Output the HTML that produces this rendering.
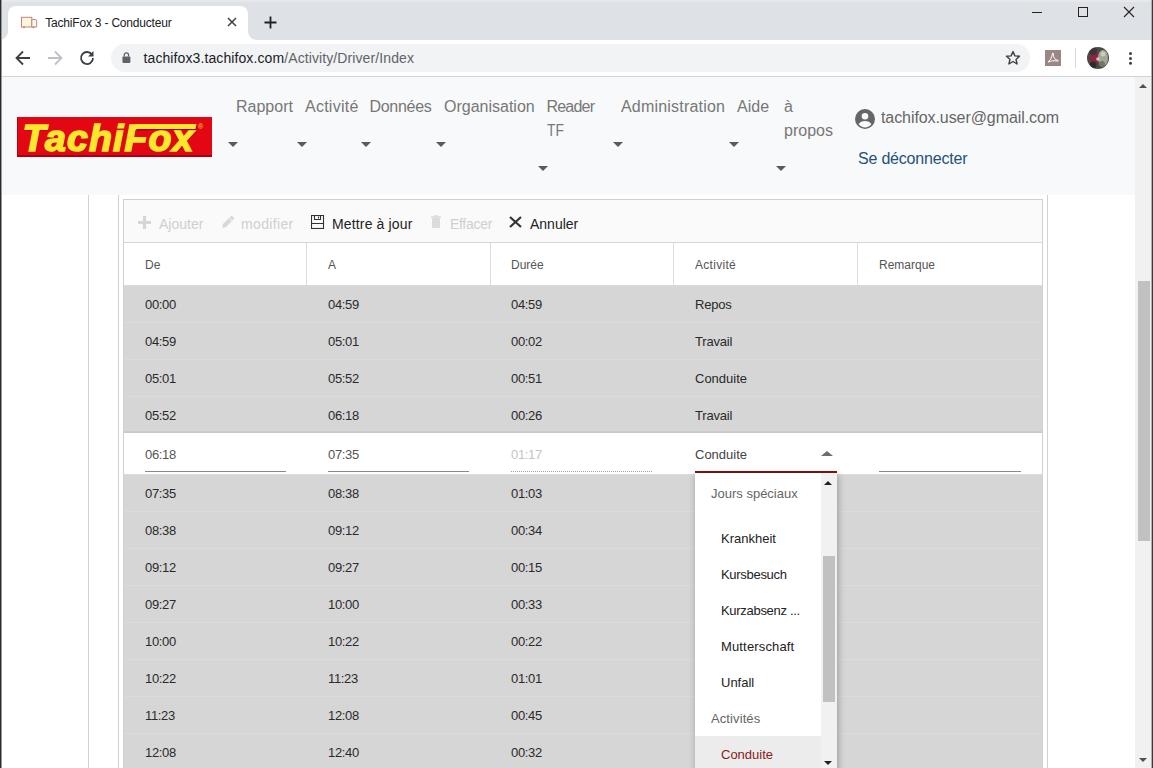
<!DOCTYPE html><html lang="fr"><head><meta charset="utf-8"><title>TachiFox 3 - Conducteur</title><style>
*{box-sizing:border-box;margin:0;padding:0}
html,body{width:1153px;height:768px;overflow:hidden;background:#fff;font-family:"Liberation Sans",sans-serif;}
.abs{position:absolute}
#root{position:relative;width:1153px;height:768px;overflow:hidden;background:#fff}
#tabstrip{left:0;top:0;width:1153px;height:40px;background:#dee1e6}
#tab{left:8px;top:6px;width:240px;height:34px;background:#fff;border-radius:8px 8px 0 0}
#tabtitle{left:45.300px;top:16px;font-size:12px;color:#202124;letter-spacing:-0.2px;white-space:nowrap}
#toolbar{left:0;top:40px;width:1153px;height:37px;background:#fff;border-bottom:1px solid #d0d2d5}
#pill{left:111px;top:44px;width:919px;height:28px;border-radius:14px;background:#f1f3f4}
#url{left:143.5px;top:50px;font-size:14px;color:#202124;white-space:nowrap;letter-spacing:0.1px}
#url span{color:#5f6368}
#nav{left:0;top:77px;width:1135px;height:118px;background:#f8f9fa}
.nv{position:absolute;font-size:16px;line-height:24px;color:#777;white-space:nowrap}
.caret{position:absolute;width:0;height:0;border-left:5px solid transparent;border-right:5px solid transparent;border-top:5px solid #5a5a5a}
#logo{left:17px;top:117px;width:195px;height:40px;background:#e30613;border-bottom:2px solid #a80010;border-left:1px solid #b80012;overflow:hidden}
#logotxt{left:4.5px;top:-1.5px;font-size:37.5px;font-weight:bold;font-style:italic;color:#fde62e;letter-spacing:1.1px;white-space:nowrap;line-height:44px;-webkit-text-stroke:1.6px #fde62e;text-shadow:1px 1px 0 #9a0010,-1px 1px 0 #b00012}
#sbar{left:1135px;top:77px;width:16px;height:691px;background:#f1f1f1}
#sthumb{left:1138px;top:281px;width:12px;height:260px;background:#c1c1c1}
.vline{position:absolute;width:1px;background:#d2d2d2}
#grid{left:123px;top:199px;width:920px;height:600px;border:1px solid #d0d0d0;background:#fff}
#gtool{left:124px;top:200px;width:918px;height:43px;background:#fafafa;border-bottom:1px solid #d6d6d6}
.tb{position:absolute;font-size:14px;white-space:nowrap;top:215.5px;line-height:16px}
.dis{color:#cfcfcf}
.en{color:#222}
#ghead{left:124px;top:243px;width:918px;height:42px;background:#fff}
.th{position:absolute;top:258px;font-size:12px;color:#555;line-height:14px;white-space:nowrap}
.row{position:absolute;left:124px;width:918px;height:37px;background:#d6d6d6;border-top:1px solid #dbdbdb}
.td{position:absolute;font-size:13px;color:#2a2a2a;line-height:15px;white-space:nowrap;letter-spacing:-0.35px}
.tx{letter-spacing:-0.2px}
.t0{letter-spacing:0}
.ul{position:absolute;height:1px;background:#8a8a8a;top:471px}
#pop{left:695px;top:473px;width:142px;height:300px;background:#fff;box-shadow:1px 2px 7px rgba(0,0,0,.3)}
.it{position:absolute;font-size:13px;line-height:15px;white-space:nowrap;color:#222;letter-spacing:-0.3px}
.gh{letter-spacing:0}
.gh{color:#666}
</style></head><body><div id="root">
<div id="tabstrip" class="abs"></div><div class="abs" style="left:0;top:0;width:1153px;height:2px;background:#e6e8ec"></div><div id="tab" class="abs"></div>
<div class="abs" style="left:0px;top:32px;width:8px;height:8px;background:radial-gradient(circle at 0 0,rgba(255,255,255,0) 7.500px,#fff 8px)"></div><div class="abs" style="left:248px;top:32px;width:8px;height:8px;background:radial-gradient(circle at 100% 0,rgba(255,255,255,0) 7.500px,#fff 8px)"></div>
<svg class="abs" style="left:20px;top:15px" width="18" height="14" viewBox="0 0 18 14"><rect x="1.500" y="2.300" width="10.300" height="9.700" fill="#fdf5dc" stroke="#c0897c" stroke-width="1"/><path d="M11.800 4.500h3.200a1.700 1.700 0 0 1 1.700 1.700v5.800h-4.900z" fill="#fdf8ea" stroke="#b88a80" stroke-width="1"/><circle cx="4" cy="12.300" r="1" fill="#c0897c"/><circle cx="13.500" cy="12.300" r="1" fill="#c0897c"/></svg>
<div id="tabtitle" class="abs">TachiFox 3 - Conducteur</div>
<svg class="abs" style="left:227px;top:17px" width="10" height="10" viewBox="0 0 10 10"><path d="M1 1L9 9M9 1L1 9" stroke="#3c4043" stroke-width="1.5" fill="none"/></svg>
<svg class="abs" style="left:264px;top:16px" width="13" height="13" viewBox="0 0 13 13"><path d="M6.5 0.5V12.5M0.5 6.5H12.5" stroke="#202124" stroke-width="1.8" fill="none"/></svg>
<svg class="abs" style="left:1030px;top:4px" width="110" height="18" viewBox="0 0 110 18"><path d="M2 8.5H12" stroke="#222" stroke-width="1"/><rect x="48.5" y="3.5" width="9" height="9" fill="none" stroke="#222" stroke-width="1"/><path d="M94 3L104 13M104 3L94 13" stroke="#222" stroke-width="1.1"/></svg>
<div id="toolbar" class="abs"></div><div id="pill" class="abs"></div>
<svg class="abs" style="left:15px;top:50px" width="16" height="16" viewBox="0 0 16 16"><path d="M15 8H2M8 1.5L1.5 8L8 14.5" stroke="#3c4043" stroke-width="1.8" fill="none"/></svg>
<svg class="abs" style="left:47px;top:50px" width="16" height="16" viewBox="0 0 16 16"><path d="M1 8H14M8 1.5L14.5 8L8 14.5" stroke="#bdc1c6" stroke-width="1.8" fill="none"/></svg>
<svg class="abs" style="left:79px;top:50px" width="16" height="16" viewBox="0 0 16 16"><path d="M13.2 5A6 6 0 1 0 14 8" stroke="#3c4043" stroke-width="1.8" fill="none"/><path d="M14.5 1v5.5H9z" fill="#3c4043"/></svg>
<svg class="abs" style="left:122.300px;top:51.800px" width="8.800" height="11.400" viewBox="0 0 10 13"><rect x="0.5" y="5" width="9" height="7.5" rx="1" fill="#5f6368"/><path d="M2.5 5V3.5a2.5 2.5 0 0 1 5 0V5" stroke="#5f6368" stroke-width="1.4" fill="none"/></svg>
<div id="url" class="abs">tachifox3.tachifox.com<span>/Activity/Driver/Index</span></div>
<svg class="abs" style="left:1005px;top:50px" width="16" height="16" viewBox="0 0 16 16"><path d="M8 1.6l1.9 4.3 4.6.4-3.5 3.1 1.1 4.6L8 11.5 3.9 14l1.1-4.6L1.5 6.3l4.6-.4z" fill="none" stroke="#3c4043" stroke-width="1.4" stroke-linejoin="round"/></svg>
<svg class="abs" style="left:1045px;top:50px" width="16" height="16" viewBox="0 0 16 16"><rect width="16" height="16" fill="#9c8684"/><path d="M3 12c2-1 4-5 4.5-8.5c.3-1.5 1.2-.5.8 1.5c-.4 2 2 5 4.700 5.500c1 .2 0 1-1.500.5c-2-.6-5-.3-8.500 1z" fill="none" stroke="#fff" stroke-width="1"/></svg>
<div class="abs" style="left:1075px;top:48px;width:1px;height:20px;background:#d5d7da"></div>
<svg class="abs" style="left:1087px;top:47px" width="22" height="22" viewBox="0 0 22 22"><defs><clipPath id="av"><circle cx="11" cy="11" r="11"/></clipPath></defs><g clip-path="url(#av)"><rect width="22" height="22" fill="#4d4946"/><ellipse cx="8" cy="11" rx="5.500" ry="6" fill="#8a2440"/><ellipse cx="16" cy="11" rx="5" ry="8" fill="#a3a596"/><circle cx="16" cy="7" r="2.500" fill="#c9cbbd"/><circle cx="15" cy="17" r="3" fill="#6d7a62"/><circle cx="6" cy="4" r="4" fill="#3a3636"/><circle cx="6" cy="18" r="3.500" fill="#2f2c2d"/><circle cx="11" cy="12" r="1.800" fill="#d8c3c0"/></g></svg>
<svg class="abs" style="left:1128px;top:49px" width="5" height="18" viewBox="0 0 5 18"><circle cx="2.500" cy="4.600" r="1.500" fill="#3c4043"/><circle cx="2.500" cy="9.400" r="1.500" fill="#3c4043"/><circle cx="2.500" cy="14.200" r="1.500" fill="#3c4043"/></svg>
<div id="nav" class="abs"></div>
<div id="logo" class="abs"><div id="logotxt" class="abs">TachiFox</div><div class="abs" style="left:118px;top:7px;width:60px;height:5px;background:#fde62e;transform:skewX(-12deg);box-shadow:1px 1px 0 #9a0010"></div><div class="abs" style="left:180px;top:6px;font-size:7px;color:#fde62e;line-height:8px">®</div></div>
<div class="nv" style="left:236px;top:95px;">Rapport</div>
<div class="nv" style="left:305px;top:95px;letter-spacing:0.25px">Activité</div>
<div class="nv" style="left:369.5px;top:95px;letter-spacing:-0.3px">Données</div>
<div class="nv" style="left:444px;top:95px;">Organisation</div>
<div class="nv" style="left:546.5px;top:95px;letter-spacing:-0.8px">Reader</div>
<div class="nv" style="left:547px;top:119px;transform:scaleX(.86);transform-origin:left">TF</div>
<div class="nv" style="left:621px;top:95px;letter-spacing:0.2px">Administration</div>
<div class="nv" style="left:737px;top:95px;">Aide</div>
<div class="nv" style="left:784px;top:95px;">à</div>
<div class="nv" style="left:784px;top:119px;">propos</div>
<div class="caret" style="left:228px;top:142px"></div>
<div class="caret" style="left:297px;top:142px"></div>
<div class="caret" style="left:361px;top:142px"></div>
<div class="caret" style="left:436px;top:142px"></div>
<div class="caret" style="left:538px;top:166px"></div>
<div class="caret" style="left:613px;top:142px"></div>
<div class="caret" style="left:729px;top:142px"></div>
<div class="caret" style="left:776px;top:166px"></div>
<svg class="abs" style="left:855px;top:109px" width="20" height="20" viewBox="0 0 20 20"><circle cx="10" cy="10" r="10" fill="#666"/><circle cx="10" cy="7.2" r="3.3" fill="#f8f9fa"/><path d="M3.6 15.200c1.300-2.300 3.800-3.200 6.400-3.200s5.100.9 6.400 3.200a8 8 0 0 1-12.800 0z" fill="#f8f9fa"/></svg>
<div class="nv" style="left:881px;top:106px;color:#666;letter-spacing:-0.08px">tachifox.user@gmail.com</div>
<div class="nv" style="left:858px;top:147px;color:#23527c;letter-spacing:-0.2px">Se déconnecter</div>
<div id="sbar" class="abs"></div><div id="sthumb" class="abs"></div>
<div class="abs" style="left:1139px;top:84px;width:0;height:0;border-left:4px solid transparent;border-right:4px solid transparent;border-bottom:4px solid #505050"></div>
<div class="abs" style="left:1139px;top:758px;width:0;height:0;border-left:4px solid transparent;border-right:4px solid transparent;border-top:4px solid #505050"></div>
<div class="abs" style="left:1151px;top:0;width:1px;height:768px;background:#b0b0b0"></div><div class="abs" style="left:1152px;top:0;width:1px;height:768px;background:#3a3a3a"></div>
<div class="abs" style="left:0;top:0;width:1px;height:768px;background:#2a2a2a"></div><div class="abs" style="left:1px;top:0;width:1px;height:768px;background:#9a9a9a"></div>
<div class="vline" style="left:88px;top:195px;height:573px"></div>
<div class="vline" style="left:118px;top:195px;height:573px"></div>
<div class="vline" style="left:1047px;top:195px;height:573px"></div>
<div id="grid" class="abs"></div><div id="gtool" class="abs"></div>
<svg class="abs" style="left:137.500px;top:215.500px" width="13" height="13" viewBox="0 0 13 13"><path d="M6.500 0V13M0 6.500H13" stroke="#d6d6d6" stroke-width="3.200"/></svg>
<div class="tb dis" style="left:159px">Ajouter</div>
<svg class="abs" style="left:221px;top:215px" width="14" height="14" viewBox="0 0 14 14"><path d="M1 13l1-4 6-6 3 3-6 6z" fill="#d8d8d8"/><path d="M9.500 1.500l3 3" stroke="#d8d8d8" stroke-width="3"/></svg>
<div class="tb dis" style="left:241px;letter-spacing:0.35px">modifier</div>
<svg class="abs" style="left:311px;top:215px" width="14" height="14" viewBox="0 0 14 14"><rect x="0.500" y="0.500" width="12" height="13" fill="none" stroke="#333" stroke-width="1.100"/><path d="M3.500 0.500v4h6v-4M0.500 8.500h12" fill="none" stroke="#333" stroke-width="1.100"/><path d="M7.500 1.500v2" stroke="#333" stroke-width="1"/></svg>
<div class="tb en" style="left:332px;letter-spacing:0.15px">Mettre à jour</div>
<svg class="abs" style="left:431px;top:215px" width="10" height="14" viewBox="0 0 10 14"><path d="M1 3h8v10H1z" fill="#dcdcdc"/><path d="M0 2h10M3.500 0.500h3" stroke="#dcdcdc" stroke-width="1.500"/></svg>
<div class="tb dis" style="left:450px;letter-spacing:-0.3px">Effacer</div>
<svg class="abs" style="left:509px;top:216px" width="13" height="12" viewBox="0 0 13 12"><path d="M1 1L12 11M12 1L1 11" stroke="#333" stroke-width="2.200"/></svg>
<div class="tb en" style="left:530px">Annuler</div>
<div id="ghead" class="abs"></div>
<div class="vline" style="left:306px;top:243px;height:42px;background:#dedede"></div>
<div class="vline" style="left:490px;top:243px;height:42px;background:#dedede"></div>
<div class="vline" style="left:673px;top:243px;height:42px;background:#dedede"></div>
<div class="vline" style="left:857px;top:243px;height:42px;background:#dedede"></div>
<div class="th" style="left:145px;">De</div>
<div class="th" style="left:328px;">A</div>
<div class="th" style="left:511px;">Durée</div>
<div class="th" style="left:695px;letter-spacing:0.3px">Activité</div>
<div class="th" style="left:879px;">Remarque</div>
<div class="row" style="top:285px"></div>
<div class="td" style="left:145px;top:297px">00:00</div>
<div class="td" style="left:328px;top:297px">04:59</div>
<div class="td" style="left:511px;top:297px">04:59</div>
<div class="td tx" style="left:695px;top:297px">Repos</div>
<div class="row" style="top:322px"></div>
<div class="td" style="left:145px;top:334px">04:59</div>
<div class="td" style="left:328px;top:334px">05:01</div>
<div class="td" style="left:511px;top:334px">00:02</div>
<div class="td tx" style="left:695px;top:334px">Travail</div>
<div class="row" style="top:359px"></div>
<div class="td" style="left:145px;top:371px">05:01</div>
<div class="td" style="left:328px;top:371px">05:52</div>
<div class="td" style="left:511px;top:371px">00:51</div>
<div class="td t0" style="left:695px;top:371px">Conduite</div>
<div class="row" style="top:396px"></div>
<div class="td" style="left:145px;top:408px">05:52</div>
<div class="td" style="left:328px;top:408px">06:18</div>
<div class="td" style="left:511px;top:408px">00:26</div>
<div class="td tx" style="left:695px;top:408px">Travail</div>
<div class="abs" style="left:124px;top:431px;width:918px;height:2px;background:linear-gradient(#d0d0d0,#c4c4c4)"></div>
<div class="td" style="left:145px;top:447px;color:#555">06:18</div>
<div class="td" style="left:328px;top:447px;color:#555">07:35</div>
<div class="td" style="left:511px;top:447px;color:#c4c4c4">01:17</div>
<div class="td" style="left:695px;top:447px;color:#444;letter-spacing:0">Conduite</div>
<div class="ul" style="left:145px;width:141px"></div><div class="ul" style="left:328px;width:141px"></div>
<div class="abs" style="left:511px;top:471px;width:141px;height:0;border-top:1px dotted #a0a0a0"></div>
<div class="ul" style="left:879px;width:142px"></div>
<div class="abs" style="left:695px;top:471px;width:142px;height:2px;background:#7d1616"></div>
<div class="abs" style="left:821px;top:451px;width:0;height:0;border-left:6.5px solid transparent;border-right:6.5px solid transparent;border-bottom:5.5px solid #6e6e6e"></div>
<div class="row" style="top:474px"></div>
<div class="td" style="left:145px;top:486px">07:35</div>
<div class="td" style="left:328px;top:486px">08:38</div>
<div class="td" style="left:511px;top:486px">01:03</div>
<div class="row" style="top:511px"></div>
<div class="td" style="left:145px;top:523px">08:38</div>
<div class="td" style="left:328px;top:523px">09:12</div>
<div class="td" style="left:511px;top:523px">00:34</div>
<div class="row" style="top:548px"></div>
<div class="td" style="left:145px;top:560px">09:12</div>
<div class="td" style="left:328px;top:560px">09:27</div>
<div class="td" style="left:511px;top:560px">00:15</div>
<div class="row" style="top:585px"></div>
<div class="td" style="left:145px;top:597px">09:27</div>
<div class="td" style="left:328px;top:597px">10:00</div>
<div class="td" style="left:511px;top:597px">00:33</div>
<div class="row" style="top:622px"></div>
<div class="td" style="left:145px;top:634px">10:00</div>
<div class="td" style="left:328px;top:634px">10:22</div>
<div class="td" style="left:511px;top:634px">00:22</div>
<div class="row" style="top:659px"></div>
<div class="td" style="left:145px;top:671px">10:22</div>
<div class="td" style="left:328px;top:671px">11:23</div>
<div class="td" style="left:511px;top:671px">01:01</div>
<div class="row" style="top:696px"></div>
<div class="td" style="left:145px;top:708px">11:23</div>
<div class="td" style="left:328px;top:708px">12:08</div>
<div class="td" style="left:511px;top:708px">00:45</div>
<div class="row" style="top:733px"></div>
<div class="td" style="left:145px;top:745px">12:08</div>
<div class="td" style="left:328px;top:745px">12:40</div>
<div class="td" style="left:511px;top:745px">00:32</div>
<div id="pop" class="abs"></div>
<div class="abs" style="left:695px;top:736px;width:126px;height:32px;background:#ececec"></div>
<div class="abs" style="left:821px;top:473px;width:16px;height:295px;background:#f1f1f1"></div>
<div class="abs" style="left:823px;top:556px;width:12px;height:146px;background:#c1c1c1"></div>
<div class="abs" style="left:824px;top:481px;width:0;height:0;border-left:4px solid transparent;border-right:4px solid transparent;border-bottom:4px solid #222"></div>
<div class="abs" style="left:824px;top:761px;width:0;height:0;border-left:4px solid transparent;border-right:4px solid transparent;border-top:4px solid #222"></div>
<div class="it gh" style="left:711px;top:486px;letter-spacing:0px">Jours spéciaux</div>
<div class="it " style="left:721px;top:531px;letter-spacing:0px">Krankheit</div>
<div class="it " style="left:721px;top:567px;letter-spacing:-0.3px">Kursbesuch</div>
<div class="it " style="left:721px;top:603px;letter-spacing:-0.3px">Kurzabsenz ...</div>
<div class="it " style="left:721px;top:639px;letter-spacing:0.15px">Mutterschaft</div>
<div class="it " style="left:721px;top:675px;letter-spacing:0px">Unfall</div>
<div class="it gh" style="left:711px;top:711px;letter-spacing:0.1px">Activités</div>
<div class="it sel" style="left:721px;top:747px;color:#8b1a1a;letter-spacing:0px">Conduite</div>
</div></body></html>
